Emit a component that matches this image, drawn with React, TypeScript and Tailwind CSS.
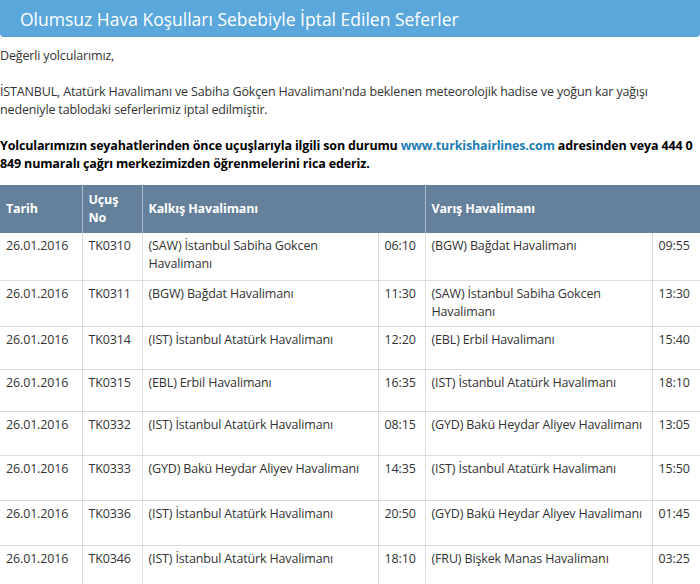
const rows = [
  ["26.01.2016","TK0310","(SAW) İstanbul Sabiha Gokcen Havalimanı","06:10","(BGW) Bağdat Havalimanı","09:55"],
  ["26.01.2016","TK0311","(BGW) Bağdat Havalimanı","11:30","(SAW) İstanbul Sabiha Gokcen Havalimanı","13:30"],
  ["26.01.2016","TK0314","(IST) İstanbul Atatürk Havalimanı","12:20","(EBL) Erbil Havalimanı","15:40"],
  ["26.01.2016","TK0315","(EBL) Erbil Havalimanı","16:35","(IST) İstanbul Atatürk Havalimanı","18:10"],
  ["26.01.2016","TK0332","(IST) İstanbul Atatürk Havalimanı","08:15","(GYD) Bakü Heydar Aliyev Havalimanı","13:05"],
  ["26.01.2016","TK0333","(GYD) Bakü Heydar Aliyev Havalimanı","14:35","(IST) İstanbul Atatürk Havalimanı","15:50"],
  ["26.01.2016","TK0336","(IST) İstanbul Atatürk Havalimanı","20:50","(GYD) Bakü Heydar Aliyev Havalimanı","01:45"],
  ["26.01.2016","TK0346","(IST) İstanbul Atatürk Havalimanı","18:10","(FRU) Bişkek Manas Havalimanı","03:25"],
];
const heights = ["h-[47px]","h-[46px]","h-[43px]","h-[42px]","h-[44px]","h-[45px]","h-[45px]","h-[45px]"];
export default function App() {
  return (
    <div className="w-[700px] h-[584px] overflow-hidden bg-white text-[12.5px] tracking-[-0.15px] text-[#333] leading-[18px]" style={{fontFamily:'"Open Sans","DejaVu Sans",sans-serif'}}>
      <div className="h-[37px] bg-[#5aa7dc] rounded-b-[4px] flex items-center pl-[20px] text-white text-[17.5px] tracking-normal">Olumsuz Hava Koşulları Sebebiyle İptal Edilen Seferler</div>
      <p className="mt-[10px]">Değerli yolcularımız,</p>
      <p className="mt-[18px]">İSTANBUL, Atatürk Havalimanı ve Sabiha Gökçen Havalimanı'nda beklenen meteorolojik hadise ve yoğun kar yağışı nedeniyle tablodaki seferlerimiz iptal edilmiştir.</p>
      <p className="mt-[18px] font-bold text-black">Yolcularımızın seyahatlerinden önce uçuşlarıyla ilgili son durumu <span className="text-[#1d7db5]">www.turkishairlines.com</span> adresinden veya 444 0 849 numaralı çağrı merkezimizden öğrenmelerini rica ederiz.</p>
      <table className="mt-[12px] w-[700px] border-collapse table-fixed">
        <colgroup><col className="w-[82px]"/><col className="w-[60px]"/><col className="w-[236px]"/><col className="w-[47px]"/><col className="w-[227px]"/><col className="w-[48px]"/></colgroup>
        <thead>
          <tr className="h-[48px] bg-[#64809b] text-white font-bold text-left">
            <th className="px-[6px] border-r border-[#a9bccd]">Tarih</th>
            <th className="px-[6px] border-r border-[#a9bccd]">Uçuş<br/>No</th>
            <th className="px-[6px]" colSpan={2}>Kalkış Havalimanı</th>
            <th className="px-[6px] border-l border-[#a9bccd]" colSpan={2}>Varış Havalimanı</th>
          </tr>
        </thead>
        <tbody>
          {rows.map((r,i)=>(
            <tr key={i} className={heights[i]+" border-b border-[#dcdcdc]"}>
              {r.map((c,j)=>(
                <td key={j} className={"align-top pl-[6px] pr-[4px] pt-[4px] border-[#dcdcdc] "+(j<5?"border-r":"")}>{c}</td>
              ))}
            </tr>
          ))}
        </tbody>
      </table>
    </div>
  );
}
